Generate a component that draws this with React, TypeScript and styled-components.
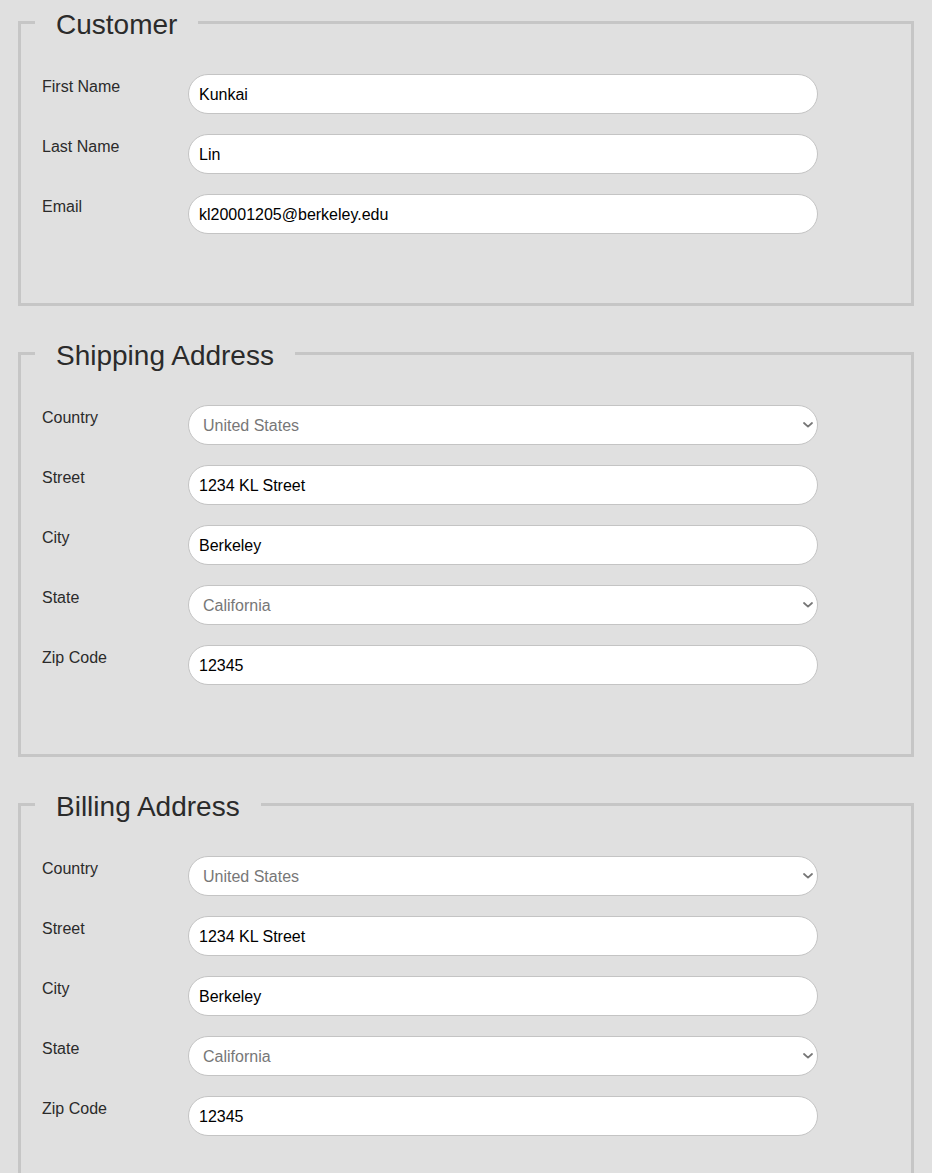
import React from "react";
import styled, { createGlobalStyle } from "styled-components";

const GlobalStyle = createGlobalStyle`
  html, body {
    margin: 0;
    padding: 0;
    background: #e0e0e0;
    font-family: "Liberation Sans", Arial, Helvetica, sans-serif;
  }
  * { box-sizing: border-box; }
`;

const Page = styled.form`
  padding: 3px 18px 20px;
`;

const Section = styled.fieldset`
  margin: 0 0 28px;
  padding: 33px 14px 69px;
  border: 3px solid #c6c6c6;
  min-width: 0;
`;

const Legend = styled.legend`
  padding: 6px 21px 0;
  font-size: 28px;
  line-height: 32px;
  color: #2b2b2b;
  font-weight: 400;
`;

const Rows = styled.div`
  display: flex;
  flex-direction: column;
  gap: 20px;
`;

const Row = styled.div`
  display: grid;
  grid-template-columns: 146px 630px;
  align-items: start;
  padding-left: 7px;
`;

const Label = styled.label`
  padding-top: 4px;
  font-size: 16px;
  line-height: 18px;
  color: #2b2b2b;
`;

const fieldBase = `
  width: 630px;
  height: 40px;
  border: 1px solid #c4c4c4;
  border-radius: 20px;
  background: #ffffff;
  font-family: "Liberation Sans", Arial, Helvetica, sans-serif;
  font-size: 16px;
  outline: none;
  margin: 0;
`;

const TextInput = styled.input`
  ${fieldBase}
  padding: 1px 10px 0;
  color: #000;
`;

const SelectWrap = styled.div`
  position: relative;
  width: 630px;
  height: 40px;
`;

const Select = styled.select`
  ${fieldBase}
  appearance: none;
  -webkit-appearance: none;
  padding: 0 30px 0 14px;
  color: #777777;
`;

const Chevron = styled.svg`
  position: absolute;
  right: 5px;
  top: 17px;
  width: 10px;
  height: 6px;
  pointer-events: none;
`;

type Field =
  | { kind: "text"; label: string; value: string }
  | { kind: "select"; label: string; value: string };

const Dropdown: React.FC<{ id: string; value: string }> = ({ id, value }) => (
  <SelectWrap>
    <Select id={id} defaultValue={value}>
      <option value={value}>{value}</option>
    </Select>
    <Chevron viewBox="0 0 10 6">
      <path d="M1 1 L5 4.6 L9 1" fill="none" stroke="#777" strokeWidth="1.8" strokeLinecap="round" strokeLinejoin="round" />
    </Chevron>
  </SelectWrap>
);

const FieldSet: React.FC<{ title: string; prefix: string; fields: Field[] }> = ({ title, prefix, fields }) => (
  <Section>
    <Legend>{title}</Legend>
    <Rows>
      {fields.map((f, i) => {
        const id = `${prefix}-${i}`;
        return (
          <Row key={id}>
            <Label htmlFor={id}>{f.label}</Label>
            {f.kind === "text" ? (
              <TextInput id={id} type="text" defaultValue={f.value} />
            ) : (
              <Dropdown id={id} value={f.value} />
            )}
          </Row>
        );
      })}
    </Rows>
  </Section>
);

const address: Field[] = [
  { kind: "select", label: "Country", value: "United States" },
  { kind: "text", label: "Street", value: "1234 KL Street" },
  { kind: "text", label: "City", value: "Berkeley" },
  { kind: "select", label: "State", value: "California" },
  { kind: "text", label: "Zip Code", value: "12345" },
];

export default function App() {
  return (
    <>
      <GlobalStyle />
      <Page>
        <FieldSet
          title="Customer"
          prefix="customer"
          fields={[
            { kind: "text", label: "First Name", value: "Kunkai" },
            { kind: "text", label: "Last Name", value: "Lin" },
            { kind: "text", label: "Email", value: "kl20001205@berkeley.edu" },
          ]}
        />
        <FieldSet title="Shipping Address" prefix="shipping" fields={address} />
        <FieldSet title="Billing Address" prefix="billing" fields={address} />
      </Page>
    </>
  );
}
